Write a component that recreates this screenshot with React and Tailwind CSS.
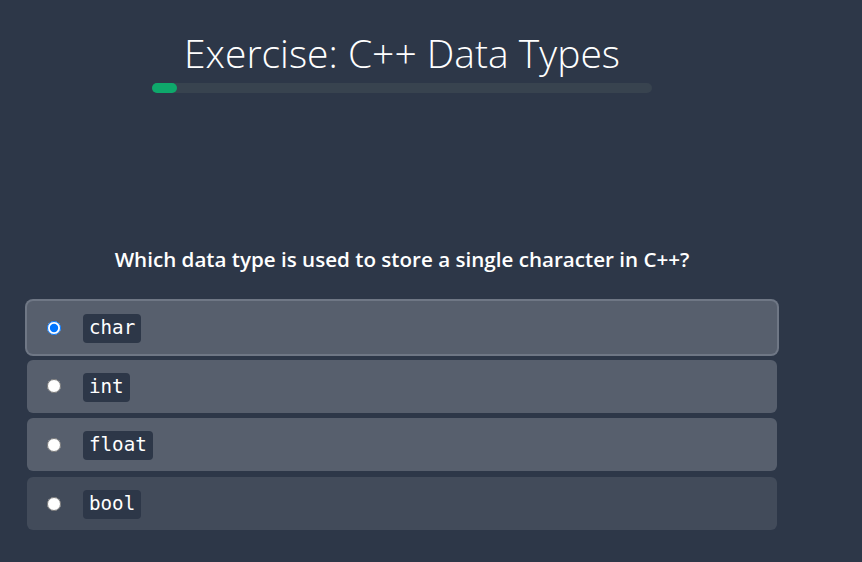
import { useState } from "react";

const options = ["char", "int", "float", "bool"];

const App = () => {
  const [selected, setSelected] = useState("char");

  return (
    <div className="min-h-screen w-full bg-[#2d3748] font-['Open_Sans',sans-serif]">
      <div className="w-[804px] flex flex-col items-center">
        {/* Header */}
        <h1 className="mt-[29px] text-[39px] leading-[48px] font-light text-white">
          Exercise: C++ Data Types
        </h1>
        <div className="mt-[6px] w-[500px] h-[10px] rounded-full bg-[#38434f]">
          <div className="w-[25px] h-full rounded-full bg-[#0ea86b]" />
        </div>

        {/* Question */}
        <p className="mt-[152px] text-[20.6px] leading-[28px] font-semibold text-white">
          Which data type is used to store a single character in C++?
        </p>

        {/* Options */}
        <div className="mt-[28px] w-[750px] flex flex-col gap-[5.7px]">
          {options.map((opt, i) => (
            <label
              key={opt}
              className={`h-[53px] rounded-md flex items-center cursor-pointer ${
                selected === opt ? "ring-2 ring-[#6f7785]" : ""
              } ${i < 3 ? "bg-[#575f6d]" : "bg-[#424b5a]"}`}
            >
              <input
                type="radio"
                name="answer"
                checked={selected === opt}
                onChange={() => setSelected(opt)}
                className="ml-[20px] w-[14px] h-[14px]"
              />
              <code className="ml-[22px] mt-[2px] h-[29px] px-1.5 flex items-center rounded-sm bg-[#2d3748] text-white text-[19.2px] font-['DejaVu_Sans_Mono',monospace]">
                {opt}
              </code>
            </label>
          ))}
        </div>
      </div>
    </div>
  );
};

export default App;
